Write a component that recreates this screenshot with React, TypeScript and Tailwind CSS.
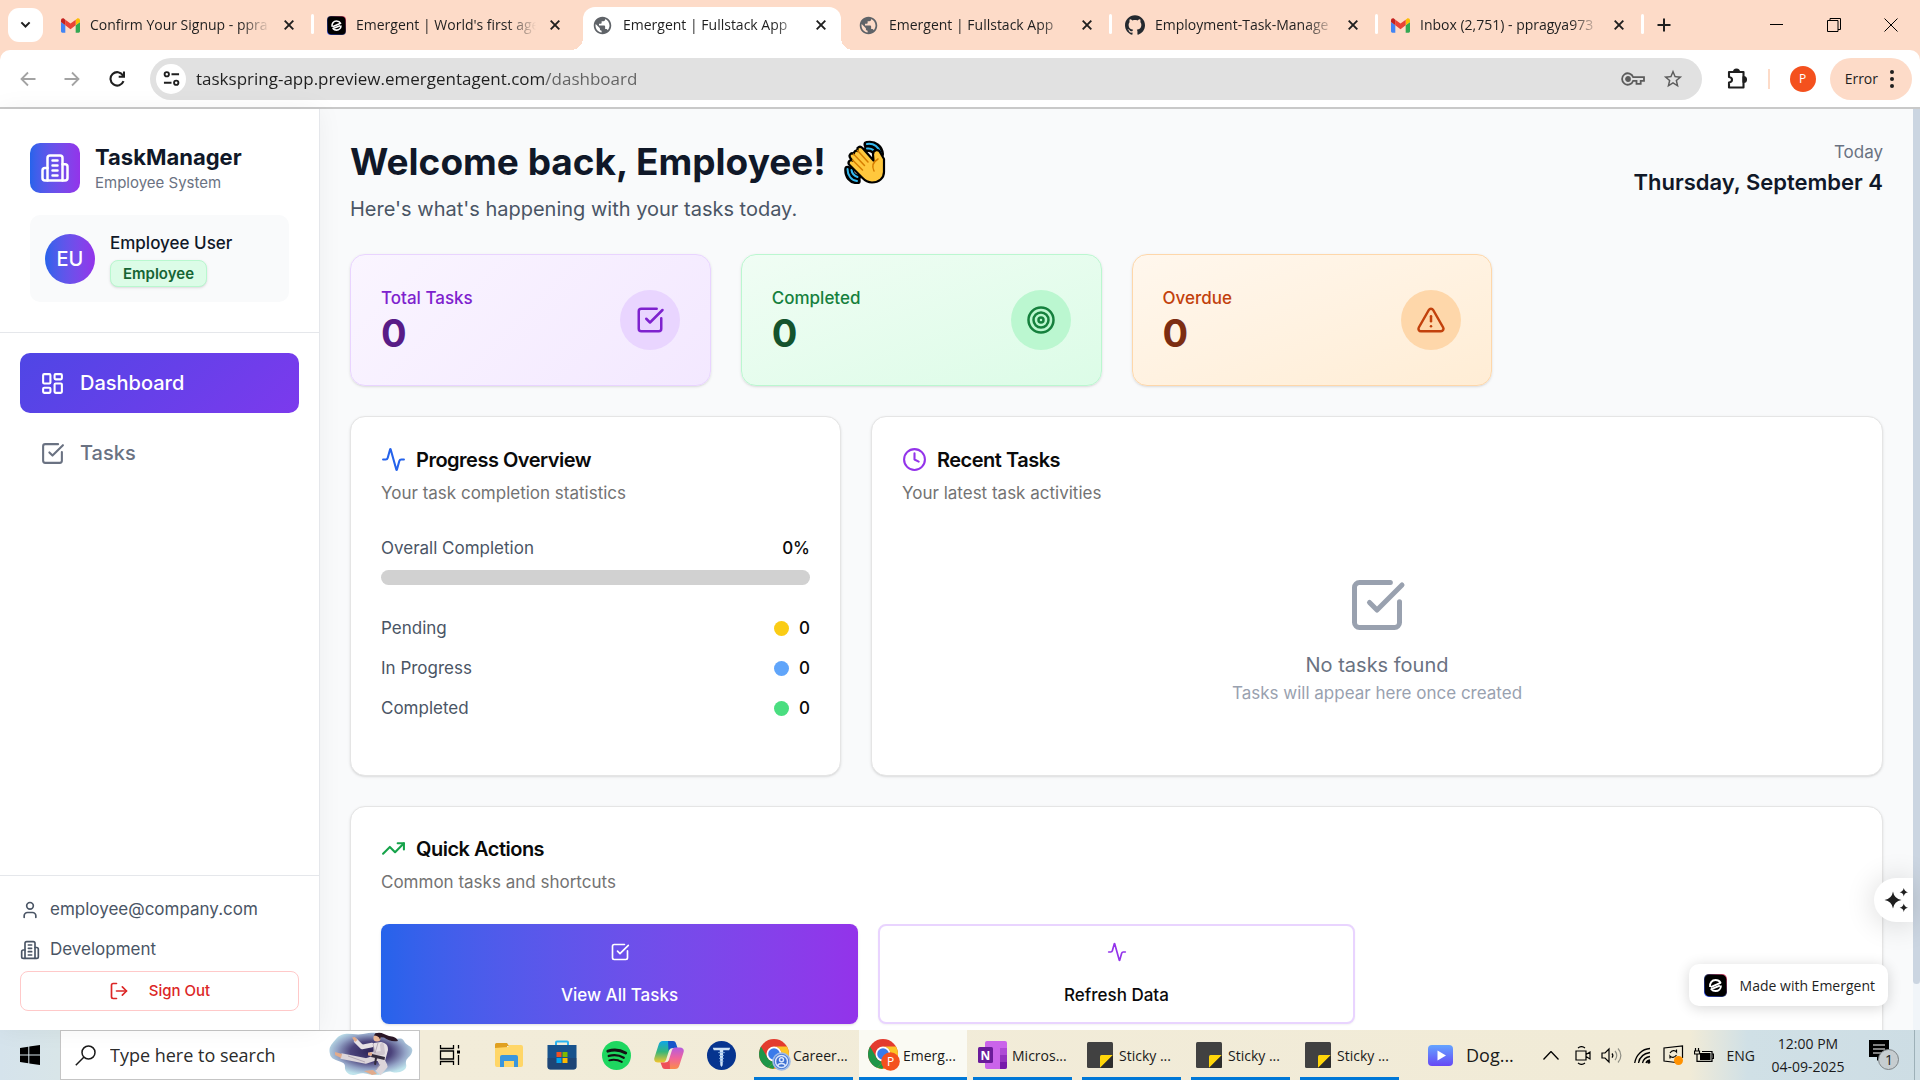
import React from "react";
import {
  Activity,
  Clock,
  LayoutDashboard,
  LogOut,
  SquareCheckBig,
  Target,
  TrendingUp,
  TriangleAlert,
  User,
} from "lucide-react";
import { MdPublic, MdStarBorder } from "react-icons/md";
import { SiGithub } from "react-icons/si";

/* ---------- Shared icons ---------- */

function BuildingIcon({ className }: { className: string }) {
  return (
    <svg viewBox="0 0 24 24" fill="none" stroke="currentColor" strokeWidth="2" strokeLinecap="round" strokeLinejoin="round" className={className} aria-hidden="true">
      <path d="M6 22V4a2 2 0 0 1 2-2h8a2 2 0 0 1 2 2v18Z" />
      <path d="M6 12H4a2 2 0 0 0-2 2v6a2 2 0 0 0 2 2h2" />
      <path d="M18 9h2a2 2 0 0 1 2 2v9a2 2 0 0 1-2 2h-2" />
      <path d="M10 6h4M10 10h4M10 14h4M10 18h4" />
    </svg>
  );
}

function GmailIcon() {
  return (
    <svg viewBox="52 42 88 66" className="h-[15px] w-[19px] shrink-0" aria-hidden="true">
      <path fill="#4285f4" d="M58 108h14V74L52 59v43c0 3.32 2.69 6 6 6" />
      <path fill="#34a853" d="M120 108h14c3.32 0 6-2.69 6-6V59l-20 15" />
      <path fill="#fbbc04" d="M120 48v26l20-15v-8c0-7.42-8.47-11.65-14.4-7.2" />
      <path fill="#ea4335" d="M72 74V48l24 18 24-18v26L96 92" />
      <path fill="#c5221f" d="M52 51v8l20 15V48l-5.6-4.2c-5.94-4.45-14.4-.22-14.4 7.2" />
    </svg>
  );
}

function EmergentIcon({ className }: { className: string }) {
  return (
    <svg viewBox="0 0 24 24" className={className} aria-hidden="true">
      <defs>
        <linearGradient id="emergent-edge" x1="0" y1="1" x2="1" y2="0">
          <stop offset="0" stopColor="#3d5bff" />
          <stop offset="0.5" stopColor="#1e2a55" />
          <stop offset="1" stopColor="#f0506e" />
        </linearGradient>
      </defs>
      <rect width="24" height="24" rx="5" fill="url(#emergent-edge)" />
      <rect x="0.7" y="0.7" width="22.6" height="22.6" rx="5" fill="#000" />
      <g fill="none" stroke="#fff" strokeWidth="2" strokeLinejoin="round">
        <path d="M6.300 13.500C5.600 9.500 8.300 6.300 12 6.300c2.300 0 4.200 1 5.200 2.900L7 13.600" />
        <path d="M17.700 12c0 3.400-2.500 5.800-5.700 5.800-1.900 0-3.400-.7-4.400-2l9-3.600" />
      </g>
    </svg>
  );
}

function WaveIcon() {
  return (
    <svg viewBox="0 0 42 44" className="h-11 w-[42px]" role="img" aria-label="Waving hand">
      <g fill="none" strokeLinecap="round">
        <path d="M23 4.500C31 3 36 8 36.500 14" stroke="#000" strokeWidth="7" />
        <path d="M23 9C28 8.500 31 11 32 15" stroke="#000" strokeWidth="6" />
        <path d="M3.500 29C3 36 7 41 13.500 41" stroke="#000" strokeWidth="6.500" />
        <path d="M7 30c0 4 3 7 7 7.500" stroke="#000" strokeWidth="6" />
        <path d="M23 4C30 3 35 7 36.500 13M23 8.500c4-.5 7.500 1.500 9 5.500" stroke="#35b8ee" strokeWidth="2" />
        <path d="M3.500 29C3.500 35.500 7.500 40.500 13 41M7.500 30c.5 3.500 3 6 6 7" stroke="#35b8ee" strokeWidth="2" />
      </g>
      <path
        d="M13.500 8c1.500-1.500 3.500-1.500 5 0l11 12.500-.5-6c0-5 6-6 7.500-1.500L40 19v13c0 6-5 10.500-12 10.500-4 0-7-1.800-10-5L5.500 25c-2.500-2.500.5-6 3-4.500C6 18 4.500 16.500 6 14.500c1-1.500 2.500-1.500 4-.5-.5-2 1.500-4 3.500-3z"
        fill="#ffc83d"
        stroke="#000"
        strokeWidth="2.200"
        strokeLinejoin="round"
      />
      <path d="M13.500 10.500 24 22M9.500 14l11 11.500M8.500 20l10 10M34 19c-5 3-6.500 7-4 12" fill="none" stroke="#d67d00" strokeWidth="1.500" strokeLinecap="round" />
    </svg>
  );
}

/* ---------- Browser chrome ---------- */

type TabInfo = { title: string; icon: "gmail" | "emergent" | "globe" | "github"; active?: boolean; divider?: boolean };

const tabs: TabInfo[] = [
  { title: "Confirm Your Signup - ppra", icon: "gmail", divider: true },
  { title: "Emergent | World's first age", icon: "emergent" },
  { title: "Emergent | Fullstack App", icon: "globe", active: true },
  { title: "Emergent | Fullstack App", icon: "globe", divider: true },
  { title: "Employment-Task-Manage", icon: "github", divider: true },
  { title: "Inbox (2,751) - ppragya973", icon: "gmail", divider: true },
];

function TabIcon({ icon }: { icon: TabInfo["icon"] }) {
  if (icon === "gmail") return <GmailIcon />;
  if (icon === "emergent") return <EmergentIcon className="size-[19px] shrink-0" />;
  if (icon === "github") return <SiGithub className="size-5 shrink-0 text-[#24292f]" />;
  return <MdPublic className="-ml-px size-[21px] shrink-0 text-[#5f6368]" />;
}

function Cross() {
  return (
    <svg viewBox="0 0 10 10" className="size-[10px]" stroke="#1f1f1f" strokeWidth="1.900" aria-hidden="true">
      <path d="M.7.7l8.600 8.600M9.300.7.7 9.300" />
    </svg>
  );
}

function Tab({ tab }: { tab: TabInfo }) {
  return (
    <div className={tab.active ? "relative mr-2 flex h-[43px] w-[258px] items-center rounded-t-[12px] bg-white pb-[7px] pl-[10px]" : "relative mr-2 flex h-[43px] w-[258px] items-center pb-[7px] pl-[10px]"}>
      <TabIcon icon={tab.icon} />
      <span className="ml-[10px] w-[184px] overflow-hidden whitespace-nowrap text-[14px] leading-5 text-[#1f1f1f] [mask-image:linear-gradient(to_right,#000_82%,transparent_98%)]">
        {tab.title}
      </span>
      <button aria-label="Close tab" className="ml-auto mr-[10px] flex size-5 items-center justify-center">
        <Cross />
      </button>
      {tab.divider && <span className="absolute -right-[5px] top-[7px] h-5 w-[3px] rounded bg-white" />}
      {tab.active && (
        <>
          <span className="absolute -left-3 bottom-0 size-3 bg-[radial-gradient(circle_at_0_0,transparent_12px,#fff_12px)]" />
          <span className="absolute -right-3 bottom-0 size-3 bg-[radial-gradient(circle_at_100%_0,transparent_12px,#fff_12px)]" />
        </>
      )}
    </div>
  );
}

function BrowserChrome() {
  return (
    <header className="shrink-0 border-b-2 border-[#c9c9c9] bg-[#fddbc8] font-['Open_Sans',sans-serif]">
      <div className="flex h-[50px] items-end">
        <button aria-label="Search tabs" className="mb-2 ml-2 mr-2 flex h-[34px] w-[35px] items-center justify-center rounded-[11px] bg-white">
          <svg viewBox="0 0 12 8" className="w-[11px]" fill="none" stroke="#1f1f1f" strokeWidth="2.200" aria-hidden="true">
            <path d="M1.500 1.500 6 6l4.500-4.500" />
          </svg>
        </button>
        {tabs.map((tab, i) => (
          <Tab key={i} tab={tab} />
        ))}
        <button aria-label="New tab" className="mb-[18px] ml-[10px] flex size-[14px] items-center justify-center">
          <svg viewBox="0 0 14 14" className="size-[14px]" stroke="#1f1f1f" strokeWidth="2" aria-hidden="true">
            <path d="M7 .5v13M.5 7h13" />
          </svg>
        </button>
        <div className="mb-[18px] ml-auto mr-[22px] flex items-center gap-[43px]">
          <button aria-label="Minimize">
            <svg viewBox="0 0 14 14" className="size-[14px]" stroke="#000" aria-hidden="true"><path d="M0 6.500h13" /></svg>
          </button>
          <button aria-label="Restore">
            <svg viewBox="0 0 14 14" className="size-[14px]" fill="none" stroke="#000" aria-hidden="true"><path d="M.5 2.500h10.500v11H.5zM3 2.500V.5h10.500v11H11" /></svg>
          </button>
          <button aria-label="Close">
            <svg viewBox="0 0 14 14" className="size-[14px]" stroke="#000" aria-hidden="true"><path d="m.5.5 13 13M13.500.5l-13 13" /></svg>
          </button>
        </div>
      </div>
      <div className="flex h-[57px] items-center rounded-t-[10px] bg-white pl-[19px] pr-2">
        <button aria-label="Back" className="flex w-[18px] justify-center">
          <svg viewBox="0 0 16 16" className="size-4" fill="none" stroke="#a3a3a3" strokeWidth="1.800" aria-hidden="true"><path d="M15.500 8H1.500M8 1.500 1.500 8 8 14.500" /></svg>
        </button>
        <button aria-label="Forward" className="ml-[26px] flex w-[18px] justify-center">
          <svg viewBox="0 0 16 16" className="size-4" fill="none" stroke="#a3a3a3" strokeWidth="1.800" aria-hidden="true"><path d="M.5 8h14M8 1.500 14.500 8 8 14.500" /></svg>
        </button>
        <button aria-label="Reload" className="ml-[27px] flex w-[18px] justify-center">
          <svg viewBox="0 0 16 16" className="size-4" fill="none" stroke="#1f1f1f" strokeWidth="2.100" aria-hidden="true"><path d="M14.500 10.200A6.700 6.700 0 1 1 14 4.500M15 .5v5.300H9.700" /></svg>
        </button>
        <div className="ml-6 flex h-[42px] min-w-0 flex-1 items-center rounded-full bg-[#e1e1e1] pl-[6px] pr-[18px]">
          <button aria-label="View site information" className="flex size-[30px] shrink-0 items-center justify-center rounded-full bg-white">
            <svg viewBox="0 0 18 18" className="size-[17px]" fill="none" stroke="#1f1f1f" strokeWidth="2" aria-hidden="true">
              <circle cx="4" cy="4.500" r="2.300" /><path d="M9 4.500h8M1 13.500h8" /><circle cx="14" cy="13.500" r="2.300" />
            </svg>
          </button>
          <input
            aria-label="Address"
            defaultValue="taskspring-app.preview.emergentagent.com/dashboard"
            className="ml-[10px] h-8 min-w-0 flex-1 bg-[linear-gradient(90deg,#1f1f1f_350px,#616161_350px)] bg-clip-text text-[17px] text-transparent outline-none"
          />
          <button aria-label="Saved password">
            <svg viewBox="0 0 24 14" className="h-[14px] w-6" fill="none" stroke="#5c5c5c" strokeWidth="1.800" aria-hidden="true">
              <path d="M12.200 5.200A5.700 5.700 0 1 0 12.200 8.800h3.300v3h4.200v-3H23V5.200z" /><circle cx="7" cy="7" r="2" fill="#5c5c5c" />
            </svg>
          </button>
          <button aria-label="Bookmark this tab" className="ml-[17px]"><MdStarBorder className="size-[22px] text-[#5c5c5c]" /></button>
        </div>
        <button aria-label="Extensions" className="ml-[23px]">
          <svg viewBox="0 0 24 24" className="size-6" fill="none" stroke="#1f1f1f" strokeWidth="2.100" strokeLinejoin="round" aria-hidden="true">
            <path d="M4 5h14.500v15.500H4v-5c4-.5 4-5 0-5.500z" /><path d="M9 5a2.500 2.500 0 0 1 5 0zM18.500 10a2.500 2.500 0 0 1 0 5z" fill="#1f1f1f" />
          </svg>
        </button>
        <span className="ml-[19px] h-5 w-[2px] bg-[#fddbc8]" />
        <button aria-label="Profile" className="ml-5 flex size-[26px] items-center justify-center rounded-full bg-[#f4511e] text-[12px] text-white">P</button>
        <button className="ml-[14px] flex h-[42px] items-center rounded-full bg-[#fddbc8] pl-[15px] pr-[18px] text-[14px] text-[#1f1f1f]">
          Error
          <svg viewBox="0 0 4 18" className="ml-3 h-[18px] w-1" fill="#1f1f1f" aria-hidden="true"><circle cx="2" cy="2" r="2" /><circle cx="2" cy="9" r="2" /><circle cx="2" cy="16" r="2" /></svg>
        </button>
      </div>
    </header>
  );
}

/* ---------- Sidebar ---------- */

function Sidebar() {
  return (
    <aside className="relative z-10 flex w-80 shrink-0 flex-col border-r border-gray-200 bg-white shadow-[0_0_24px_rgba(0,0,0,0.05)]">
      <div className="border-b border-gray-200 px-[30px] pb-[30px] pt-[33px]">
        <div className="flex items-center gap-[15px]">
          <div className="flex size-[50px] items-center justify-center rounded-[10px] bg-linear-to-r from-[#2563eb] to-[#9333ea] text-white">
            <BuildingIcon className="size-[30px]" />
          </div>
          <div>
            <h1 className="text-[22px] font-bold leading-[30px] text-gray-900">TaskManager</h1>
            <p className="text-[15px] leading-[22px] text-gray-500">Employee System</p>
          </div>
        </div>
        <div className="mt-[21px] flex items-center gap-[15px] rounded-[10px] bg-[#f9fafb] p-[15px]">
          <div className="flex size-[50px] items-center justify-center rounded-full bg-linear-to-r from-[#2563eb] to-[#9333ea] text-[20px] font-medium text-white">EU</div>
          <div className="flex flex-col items-start">
            <p className="text-[17px] font-medium leading-[27px] text-gray-900">Employee User</p>
            <span className="mt-[3px] rounded-[8px] border border-green-200 bg-[#dcfce7] px-3 text-[15px] font-semibold leading-[25px] text-[#166534] shadow">Employee</span>
          </div>
        </div>
      </div>
      <nav className="flex flex-1 flex-col gap-[10px] p-5">
        <a href="#dashboard" className="flex h-[60px] items-center gap-[15px] rounded-[10px] bg-[linear-gradient(135deg,#4f46e5,#7c3aed)] px-5 text-[20px] font-medium text-white">
          <LayoutDashboard className="size-[25px]" />
          Dashboard
        </a>
        <a href="#tasks" className="flex h-[60px] items-center gap-[15px] rounded-[10px] px-5 text-[20px] font-medium text-gray-500">
          <SquareCheckBig className="size-[25px]" />
          Tasks
        </a>
      </nav>
      <div className="border-t border-gray-200 px-5 pb-[19px] pt-[21px] text-[17px] text-gray-600">
        <div className="flex h-[25px] items-center gap-[10px]"><User className="size-5" />employee@company.com</div>
        <div className="mt-[15px] flex h-[25px] items-center gap-[10px]"><BuildingIcon className="size-5" />Development</div>
        <button className="mt-[9px] flex h-10 w-full items-center justify-center gap-5 rounded-[8px] border border-red-200 text-[15px] font-medium text-[#dc2626]">
          <LogOut className="size-5" />
          Sign Out
        </button>
      </div>
    </aside>
  );
}

/* ---------- Dashboard ---------- */

function StatCard({ label, card, text, value, circle, children }: { label: string; card: string; text: string; value: string; circle: string; children: React.ReactNode }) {
  return (
    <div className={`flex items-center justify-between rounded-[15px] border p-[30px] shadow ${card}`}>
      <div>
        <p className={`text-[17px] font-medium leading-[26px] ${text}`}>{label}</p>
        <p className={`text-[38px] font-bold leading-[44px] ${value}`}>0</p>
      </div>
      <div className={`flex size-[60px] items-center justify-center rounded-full ${circle}`}>{children}</div>
    </div>
  );
}

function CardHeader({ icon, title, text }: { icon: React.ReactNode; title: string; text: string }) {
  return (
    <div>
      <h3 className="flex h-[25px] items-center gap-[10px] text-[20px] font-semibold tracking-tight text-neutral-950">{icon}{title}</h3>
      <p className="mt-[9px] text-[17px] leading-[25px] text-neutral-500">{text}</p>
    </div>
  );
}

const statuses = [
  { label: "Pending", dot: "bg-[#facc15]" },
  { label: "In Progress", dot: "bg-[#60a5fa]" },
  { label: "Completed", dot: "bg-[#4ade80]" },
];

const panel = "rounded-[15px] border border-neutral-200 bg-white px-[30px] pb-[30px] shadow";

function Dashboard() {
  return (
    <main className="min-w-0 flex-1 overflow-hidden bg-[#f9fafb] p-[30px]">
      <div className="flex items-start justify-between">
        <div>
          <h2 className="flex h-[45px] items-center gap-[18px] text-[37px] font-bold text-gray-900">
            Welcome back, Employee!
            <WaveIcon />
          </h2>
          <p className="mt-[11px] text-[20px] leading-[29px] text-gray-600">Here's what's happening with your tasks today.</p>
        </div>
        <div className="text-right">
          <p className="text-[17px] leading-[27px] text-gray-500">Today</p>
          <p className="text-[22px] font-semibold leading-[33px] text-gray-900">Thursday, September 4</p>
        </div>
      </div>

      <div className="mt-[30px] grid grid-cols-4 gap-[30px]">
        <StatCard label="Total Tasks" card="border-purple-200 bg-[linear-gradient(135deg,#faf5ff,#f3e8ff)]" text="text-[#7e22ce]" value="text-[#581c87]" circle="bg-[#e9d5ff] text-[#7e22ce]">
          <SquareCheckBig className="size-[30px]" />
        </StatCard>
        <StatCard label="Completed" card="border-[#bbf7d0] bg-linear-to-br from-[#f0fdf4] to-[#dcfce7]" text="text-[#15803d]" value="text-[#14532d]" circle="bg-[#bbf7d0] text-[#15803d]">
          <Target className="size-[30px]" />
        </StatCard>
        <StatCard label="Overdue" card="border-[#fed7aa] bg-linear-to-br from-[#fff7ed] to-[#ffedd5]" text="text-[#c2410c]" value="text-[#7c2d12]" circle="bg-[#fed7aa] text-[#c2410c]">
          <TriangleAlert className="size-[30px]" />
        </StatCard>
      </div>

      <div className="mt-[30px] grid grid-cols-3 gap-[30px]">
        <section className={`${panel} min-h-[360px] pt-[30px]`}>
          <CardHeader icon={<Activity className="size-[25px] text-[#2563eb]" />} title="Progress Overview" text="Your task completion statistics" />
          <div className="mt-[30px] flex justify-between text-[17px] leading-[25px]">
            <span className="text-gray-600">Overall Completion</span>
            <span className="font-medium text-neutral-950">0%</span>
          </div>
          <div role="progressbar" aria-label="Overall Completion" aria-valuenow={0} className="mt-[9px] h-[15px] rounded-full bg-[#d1d1d1]" />
          <dl className="mt-[31px] flex flex-col gap-[15px] text-[17px] leading-[25px]">
            {statuses.map((s) => (
              <div key={s.label} className="flex items-center justify-between">
                <dt className="text-gray-600">{s.label}</dt>
                <dd className="flex items-center gap-[10px] font-medium text-neutral-950">
                  <span className={`size-[15px] rounded-full ${s.dot}`} />0
                </dd>
              </div>
            ))}
          </dl>
        </section>
        <section className={`${panel} col-span-2 pt-[30px]`}>
          <CardHeader icon={<Clock className="size-[25px] text-[#9333ea]" />} title="Recent Tasks" text="Your latest task activities" />
          <div className="mt-[69px] flex flex-col items-center">
            <SquareCheckBig className="size-[60px] text-gray-400" />
            <p className="mt-[15px] text-[20px] leading-[30px] text-gray-500">No tasks found</p>
            <p className="text-[17px] leading-[27px] text-gray-400">Tasks will appear here once created</p>
          </div>
        </section>
      </div>

      <section className={`${panel} mt-[30px] pt-[29px]`}>
        <CardHeader icon={<TrendingUp className="size-[25px] text-[#16a34a]" />} title="Quick Actions" text="Common tasks and shortcuts" />
        <div className="mt-[29px] grid grid-cols-3 gap-5 text-[17px] font-medium">
          <button className="flex h-[100px] flex-col items-center justify-between rounded-[8px] bg-linear-to-r from-[#2563eb] to-[#9333ea] pb-4 pt-[18px] leading-[25px] text-white shadow">
            <SquareCheckBig className="size-5" />
            View All Tasks
          </button>
          <button className="flex h-[100px] flex-col items-center justify-between rounded-[8px] border-2 border-purple-200 bg-white pb-[14px] pt-4 leading-[25px] text-neutral-950 shadow-xs">
            <Activity className="size-5 text-[#9333ea]" />
            Refresh Data
          </button>
        </div>
      </section>
    </main>
  );
}

/* ---------- Taskbar ---------- */

function ChromeIcon({ badge }: { badge: "person" | "letter" }) {
  return (
    <svg viewBox="0 0 32 32" className="size-8 shrink-0" aria-hidden="true">
      <circle cx="15" cy="15" r="15" fill="#e33b2e" />
      <path d="M2 7.500 8.500 18.700A7.500 7.500 0 0 0 15 22.500l-5 6.600A15 15 0 0 1 2 7.500z" fill="#1e9648" />
      <path d="M15 22.500 9 28.700A15 15 0 0 0 28 7.500H15a7.500 7.500 0 0 1 6.500 11.200L15 30z" fill="#fcc527" />
      <path d="M9 28.700 15 22.500h2L14.500 30z" fill="#1e9648" />
      <circle cx="15" cy="15" r="7.500" fill="#fff" />
      <circle cx="15" cy="15" r="5.800" fill="#3a7bea" />
      {badge === "person" ? (
        <g>
          <circle cx="22.500" cy="22.500" r="9.300" fill="#9db9e6" />
          <circle cx="22.500" cy="22.500" r="7.500" fill="#3c6fd1" />
          <g fill="none" stroke="#dbe7fb" strokeWidth="1.500"><circle cx="22.500" cy="22.500" r="6" /><circle cx="22.500" cy="20.800" r="2" /><path d="M18.500 27c1-3.500 7-3.500 8 0" /></g>
        </g>
      ) : (
        <g>
          <circle cx="22.500" cy="22.500" r="9.300" fill="#f4511e" />
          <text x="22.500" y="26.800" textAnchor="middle" fontSize="12" fill="#fff" fontFamily="Open Sans">P</text>
        </g>
      )}
    </svg>
  );
}

function OneNoteIcon() {
  return (
    <svg viewBox="0 0 30 30" className="size-[30px] shrink-0" aria-hidden="true">
      <rect x="7" y="1" width="22" height="28" rx="2" fill="#ca64ea" />
      <path d="M22 8h7v7h-7z" fill="#ae4bd5" /><path d="M22 15h7v7h-7z" fill="#9332bf" /><path d="M22 22h7v5a2 2 0 0 1-2 2h-5z" fill="#7719aa" />
      <rect y="7" width="15" height="16" rx="1.500" fill="#6a1b9a" />
      <text x="7.500" y="19.500" textAnchor="middle" fontSize="12" fontWeight="700" fill="#fff" fontFamily="Open Sans">N</text>
    </svg>
  );
}

function StickyIcon() {
  return (
    <svg viewBox="0 0 26 26" className="size-[26px] shrink-0" aria-hidden="true">
      <rect width="26" height="26" rx="1.500" fill="#414141" />
      <path d="M13 26V14.500A1.500 1.500 0 0 1 14.500 13H26z" fill="#ffd60a" />
      <path d="M13 26 26 13v11.500a1.500 1.500 0 0 1-1.500 1.500z" fill="#2d2d2d" />
    </svg>
  );
}

function KarateArt() {
  return (
    <svg viewBox="0 0 86 46" className="h-[46px] w-[86px]" aria-hidden="true">
      <defs>
        <radialGradient id="splash" cx="0.500" cy="0.450" r="0.550">
          <stop offset="0" stopColor="#2c2256" /><stop offset="0.450" stopColor="#4c447c" /><stop offset="0.750" stopColor="#93a3c6" /><stop offset="1" stopColor="#bfe4ec" />
        </radialGradient>
      </defs>
      <path d="M8 7C16-2 25 4 35 2s18-2 25 3 13-2 16 4c2 5 10 5 8 11-1 5-7 6-6 12 2 6-6 10-14 8-7-2-9 4-17 3-8 0-11-3-17-1-7 3-14-1-13-8C17 28 3 30 2 22 0 15 4 12 8 7z" fill="url(#splash)" />
      <path d="M47 1.500c6-2.500 9 1 14 2.500 4 1 7 .5 9 5-5 1-10-.5-14-3.500L49 5z" fill="#2a1626" />
      <path d="M28 9l6 6 10-2" fill="none" stroke="#e6e0e4" strokeWidth="4.500" strokeLinecap="round" strokeLinejoin="round" />
      <path d="M46 11l7-1c5 1 7 3 7 8l-3 11H45z" fill="#e6e0e4" />
      <path d="M50 25 38 29 13 24" fill="none" stroke="#dcd5da" strokeWidth="5.500" strokeLinejoin="round" />
      <path d="M52 26l4 8-6 7" fill="none" stroke="#dcd5da" strokeWidth="7" strokeLinejoin="round" />
      <path d="M54 13l1 8-12 1" fill="none" stroke="#cfc6ce" strokeWidth="4" strokeLinecap="round" strokeLinejoin="round" />
      <path d="M44 22l13 3-.5 3L43 25zM49 26l-1 7-2-.5 1-7z" fill="#332c3c" />
      <path d="M45 12l2 9M50 11l-3 10M20 24l17 6M52 32l-4 6" stroke="#a99eac" strokeWidth="0.800" fill="none" />
      <circle cx="49" cy="6" r="3.600" fill="#eab796" />
      <path d="M46 3.500c1-3 6-3 7 1l-1 3c-1-3-3-4-6-4z" fill="#2a1626" />
      <path d="M7 20l7 2-1 4-6-3zM24 5.500l3-.5 2.500 3-2.500 2zM36 39l9-1 4 4-5 1zM40 20.500l4 0v3h-4z" fill="#e2ab8b" />
    </svg>
  );
}

const windowBtn = "flex h-[50px] items-center border-b-[3px] border-[#0078d7] pl-[5px] pt-[3px] text-left text-[14px] text-[#1a1a1a]";

function StickyWindow() {
  return <button className={`${windowBtn} mr-[10px] w-[99px] gap-[6px]`}><StickyIcon />Sticky ...</button>;
}

function Taskbar() {
  return (
    <footer className="flex h-[50px] shrink-0 items-center bg-[linear-gradient(90deg,#d5e3ec_0%,#d8e5e8_3%,#f2ecd9_21%,#f1ebd7_88%,#d0e0e6_91%,#cddde4_100%)] font-['Open_Sans',sans-serif] text-[#1a1a1a]">
      <button aria-label="Start" className="flex w-[60px] justify-center">
        <svg viewBox="0 0 20 20" className="size-5" aria-hidden="true"><path d="M0 3l8.300-1.200v7.700H0zM9.300 1.600 20 0v9.500H9.300zM0 10.500h8.300v7.700L0 17zM9.300 10.500H20V20L9.300 18.400z" /></svg>
      </button>
      <label className="flex h-[50px] w-[360px] shrink-0 items-center border border-[#c5c5c5] bg-white pl-[14px] pr-[5px]">
        <svg viewBox="0 0 21 21" className="size-[21px] shrink-0" fill="none" stroke="#1a1a1a" strokeWidth="1.500" aria-hidden="true"><circle cx="13.500" cy="7.500" r="6.500" /><path d="M9 12 .8 20.300" /></svg>
        <input aria-label="Search" placeholder="Type here to search" className="ml-[14px] min-w-0 flex-1 text-[18px] outline-none placeholder:text-[#2b2b2b]" />
        <KarateArt />
      </label>
      <div className="flex items-center">
        <button aria-label="Task view" className="flex w-[60px] justify-center">
          <svg viewBox="0 0 22 20" className="h-5 w-[22px]" fill="none" stroke="#000" strokeWidth="1.300" aria-hidden="true"><path d="M1.500 0v3.500h13V0M1.500 20v-3.500h13V20M1.500 6h13v8h-13zM19.500 0v3.500M19.500 10v10" /><path d="M18 5.500h3v3h-3z" fill="#000" stroke="none" /></svg>
        </button>
        <button aria-label="File Explorer" className="flex w-[58px] justify-center">
          <svg viewBox="0 0 28 26" className="h-[26px] w-7" aria-hidden="true"><path d="M0 2.500A1.500 1.500 0 0 1 1.500 1H12l2 3h-2v5H0z" fill="#e0a020" /><path d="M0 6l13-1 1.500-2H26a2 2 0 0 1 2 2v18a2 2 0 0 1-2 2H2a2 2 0 0 1-2-2z" fill="#ffd667" /><path d="M5 25V15a2 2 0 0 1 2-2h14a2 2 0 0 1 2 2v10h-4v-6H9v6z" fill="#3a96dd" /></svg>
        </button>
        <button aria-label="Microsoft Store" className="flex w-[48px] justify-center">
          <svg viewBox="0 0 30 30" className="size-[30px]" aria-hidden="true"><path d="M9 7V2.500a1 1 0 0 1 1-1h10a1 1 0 0 1 1 1V7" fill="none" stroke="#2bb3f0" strokeWidth="2" /><path d="M.5 5h29v21.500a3 3 0 0 1-3 3h-23a3 3 0 0 1-3-3z" fill="#17528c" /><path d="M.5 18h29v8.500a3 3 0 0 1-3 3h-23a3 3 0 0 1-3-3z" fill="#233e68" opacity=".6" /><path d="M9.500 12h5v5h-5z" fill="#f25022" /><path d="M15.500 12h5v5h-5z" fill="#7fba00" /><path d="M9.500 18h5v5h-5z" fill="#00a4ef" /><path d="M15.500 18h5v5h-5z" fill="#ffb900" /></svg>
        </button>
        <button aria-label="Spotify" className="flex w-[60px] justify-center">
          <svg viewBox="0 0 30 30" className="size-[29px]" aria-hidden="true"><circle cx="15" cy="15" r="15" fill="#1ed760" /><g fill="none" stroke="#131313" strokeLinecap="round"><path d="M6 10.500c6-1.800 13-1.200 18.500 2" strokeWidth="3" /><path d="M7 15.500c5.500-1.500 11-.8 15.500 1.800" strokeWidth="2.400" /><path d="M7.500 20c4.500-1.200 9-.6 13 1.600" strokeWidth="2" /></g></svg>
        </button>
        <button aria-label="Copilot" className="flex w-[46px] justify-center">
          <svg viewBox="0 0 30 30" className="size-[30px]" aria-hidden="true">
            <defs>
              <linearGradient id="cp-a" x1="0" y1="0" x2="0" y2="1"><stop offset="0" stopColor="#0ea5e9" /><stop offset=".5" stopColor="#35b67a" /><stop offset="1" stopColor="#f5c52c" /></linearGradient>
              <linearGradient id="cp-b" x1="0" y1="0" x2="0" y2="1"><stop offset="0" stopColor="#b55be0" /><stop offset=".5" stopColor="#f0649b" /><stop offset="1" stopColor="#fa8c4b" /></linearGradient>
            </defs>
            <path d="M9 1h9l-6 19c-1 2-2 2.500-4 2.500H4c-3 0-4.500-2-3.500-5L4.500 5C5.500 2 6.500 1 9 1z" fill="url(#cp-a)" />
            <path d="M14 1h5c2 0 2.600 1 3.200 3l1.300 4h-4c-3 0-4 1-5 3z" fill="#1656c9" />
            <path d="M21 29h-9l6-19c1-2 2-2.500 4-2.500h4c3 0 4.500 2 3.500 5L25.500 25c-1 3-2 4-4.500 4z" fill="url(#cp-b)" />
            <path d="M16 29h-5c-2 0-2.600-1-3.200-3l-1.300-3.500h4c3 0 4-1 5-3z" fill="#ef4f58" />
          </svg>
        </button>
        <button aria-label="T app" className="flex w-[58px] justify-center">
          <svg viewBox="0 0 30 30" className="size-[29px]" aria-hidden="true"><circle cx="15" cy="15" r="15" fill="#06348f" /><path d="M6 7h18l-1 2.500h-6.200l-.6 15.500-1.200 2-1.200-2-.6-15.500H7z" fill="#cfe2f6" /><path d="M11.500 12h7M12.500 15h5M12.500 18h5M13 21h4" stroke="#8db4e4" strokeWidth=".9" /></svg>
        </button>
      </div>
      <div className="ml-1 flex items-center">
        <button className={`${windowBtn} mr-[6px] w-[99px] gap-[2px]`}><ChromeIcon badge="person" />Career...</button>
        <button className={`${windowBtn} mr-[6px] w-[108px] gap-[3px] bg-[#fafaf3] pl-[9px]`}><ChromeIcon badge="letter" />Emerg...</button>
        <button className={`${windowBtn} mr-[10px] w-[99px] gap-1`}><OneNoteIcon />Micros...</button>
        <StickyWindow />
        <StickyWindow />
        <StickyWindow />
      </div>
      <button className="ml-[19px] flex items-center gap-[13px] text-[18px]">
        <svg viewBox="0 0 25 21" className="h-[21px] w-[25px]" aria-hidden="true"><defs><linearGradient id="play" x1="0" y1="0" x2="0" y2="1"><stop offset="0" stopColor="#64a4ff" /><stop offset="1" stopColor="#6648f5" /></linearGradient></defs><rect width="25" height="21" rx="4" fill="url(#play)" /><path d="m9.500 5.500 8.500 5-8.500 5z" fill="#fff" /></svg>
        Dog...
      </button>
      <div className="ml-auto flex items-center">
        <svg viewBox="0 0 16 9" className="mr-4 h-[9px] w-4" fill="none" stroke="#000" strokeWidth="1.300" aria-hidden="true"><path d="m.5 8.500 7.500-8 7.500 8" /></svg>
        <svg viewBox="0 0 16 19" className="mr-[10px] h-[19px] w-4" fill="none" stroke="#000" strokeWidth="1.200" aria-hidden="true"><path d="M1 5h10v9H1zM11 8.500 15 6v7l-4-2.500M3 2c2-1.600 5-1.600 7 0M3 17c2 1.600 5 1.600 7 0" /></svg>
        <svg viewBox="0 0 22 19" className="mr-[11px] h-[19px] w-[22px]" fill="none" stroke="#000" strokeWidth="1.200" aria-hidden="true"><path d="M1 7v5h3l4 4V3L4 7zM11 7.500c1 1.200 1 3 0 4.200" /><path d="M14 5c2.300 2.600 2.300 6.500 0 9M17 2.500c3.800 4 3.800 10 0 14" stroke="#8f8f85" /></svg>
        <svg viewBox="0 0 17 17" className="mr-3 size-[17px]" fill="none" stroke="#000" strokeWidth="1.300" aria-hidden="true"><path d="M.7 16C2 8 8 2 16 1.500M4.500 16C5.500 10 9.500 6.500 16 5.500M8.500 16c.7-3.500 3-5.800 7.500-6.500M12 16c.4-1.500 1.500-2.500 4-3" /><circle cx="14.800" cy="15" r="1" fill="#000" /></svg>
        <svg viewBox="0 0 21 20" className="mr-[10px] h-5 w-[21px]" fill="none" stroke="#000" strokeWidth="1.200" aria-hidden="true"><path d="M19.500 13V1L1 3v13l12 1.500" /><path d="M7 8c2-3 5-3 6.500-1V4.500M13.500 10c-2 3-5 3-6.500 1v2.500" /><circle cx="15.500" cy="15.500" r="4.500" fill="#ff9100" stroke="none" /></svg>
        <svg viewBox="0 0 20 14" className="mr-[13px] h-[14px] w-5" fill="none" stroke="#000" strokeWidth="1.200" aria-hidden="true"><path d="M5 13.300h13V3.500H8M18 6h1.500v4.500H18M1.500 0v3M4.500 0v3M.5 3h5v3h-5zM3 6v7.300h2" /><path d="M6 5h10.500v7H6z" fill="#000" stroke="none" /></svg>
        <span className="text-[14px]">ENG</span>
        <time className="ml-[14px] w-[78px] text-center text-[14px] leading-[23px]">12:00 PM<br /><span className="whitespace-nowrap">04-09-2025</span></time>
        <button aria-label="Notifications" className="relative ml-[22px] mr-[15px] h-[30px] w-[30px]">
          <svg viewBox="0 0 30 30" className="size-[30px]" aria-hidden="true"><path d="M0 0h20v17h-8l-4 4v-4H0z" /><path d="M4 5h12M4 9h12M4 13h9" stroke="#fff" strokeWidth="1.200" /><circle cx="19.500" cy="19.500" r="10" fill="#c6cdd0" stroke="#7d8386" /></svg>
          <span className="absolute left-[10px] top-[10px] w-5 text-center text-[14px] leading-5">1</span>
        </button>
        <span className="mr-[5px] h-[50px] w-px bg-[#9db0b8]" />
      </div>
    </footer>
  );
}

export default function App() {
  return (
    <div className="flex h-screen flex-col overflow-hidden">
      <BrowserChrome />
      <div className="relative flex min-h-0 flex-1 font-['Inter',sans-serif]">
        <Sidebar />
        <Dashboard />
        <button aria-label="Assistant" className="absolute bottom-[108px] right-[7px] flex h-11 w-[39px] items-center justify-end rounded-l-full bg-white pr-[5px] shadow-[0_2px_30px_rgba(0,0,0,0.16)]">
          <svg viewBox="0 0 24 24" className="size-6" fill="#1f1f1f" aria-hidden="true"><path d="M9 3.500q1.200 7.300 8.500 8.500Q10.200 13.200 9 20.500 7.800 13.200.5 12 7.800 10.800 9 3.500zM19.800 0q.6 3.600 4.200 4.200-3.600.6-4.200 4.200-.6-3.600-4.200-4.200 3.600-.6 4.200-4.200zM19.800 15.600q.6 3.600 4.200 4.200-3.600.6-4.200 4.200-.6-3.600-4.200-4.200 3.600-.6 4.200-4.200z" /></svg>
        </button>
        <a href="#emergent" className="absolute bottom-6 right-8 flex h-[42px] items-center gap-[13px] rounded-[10px] bg-white pl-[15px] pr-[13px] font-['Open_Sans',sans-serif] text-[14px] text-[#1f1f1f] shadow-[0_2px_14px_rgba(0,0,0,0.16)]">
          <EmergentIcon className="size-[23px]" />
          Made with Emergent
        </a>
        <div className="w-[7px] shrink-0 bg-[#f1f5f9]"><div className="h-[95%] rounded-b bg-[#cbd5e1]" /></div>
      </div>
      <Taskbar />
    </div>
  );
}
